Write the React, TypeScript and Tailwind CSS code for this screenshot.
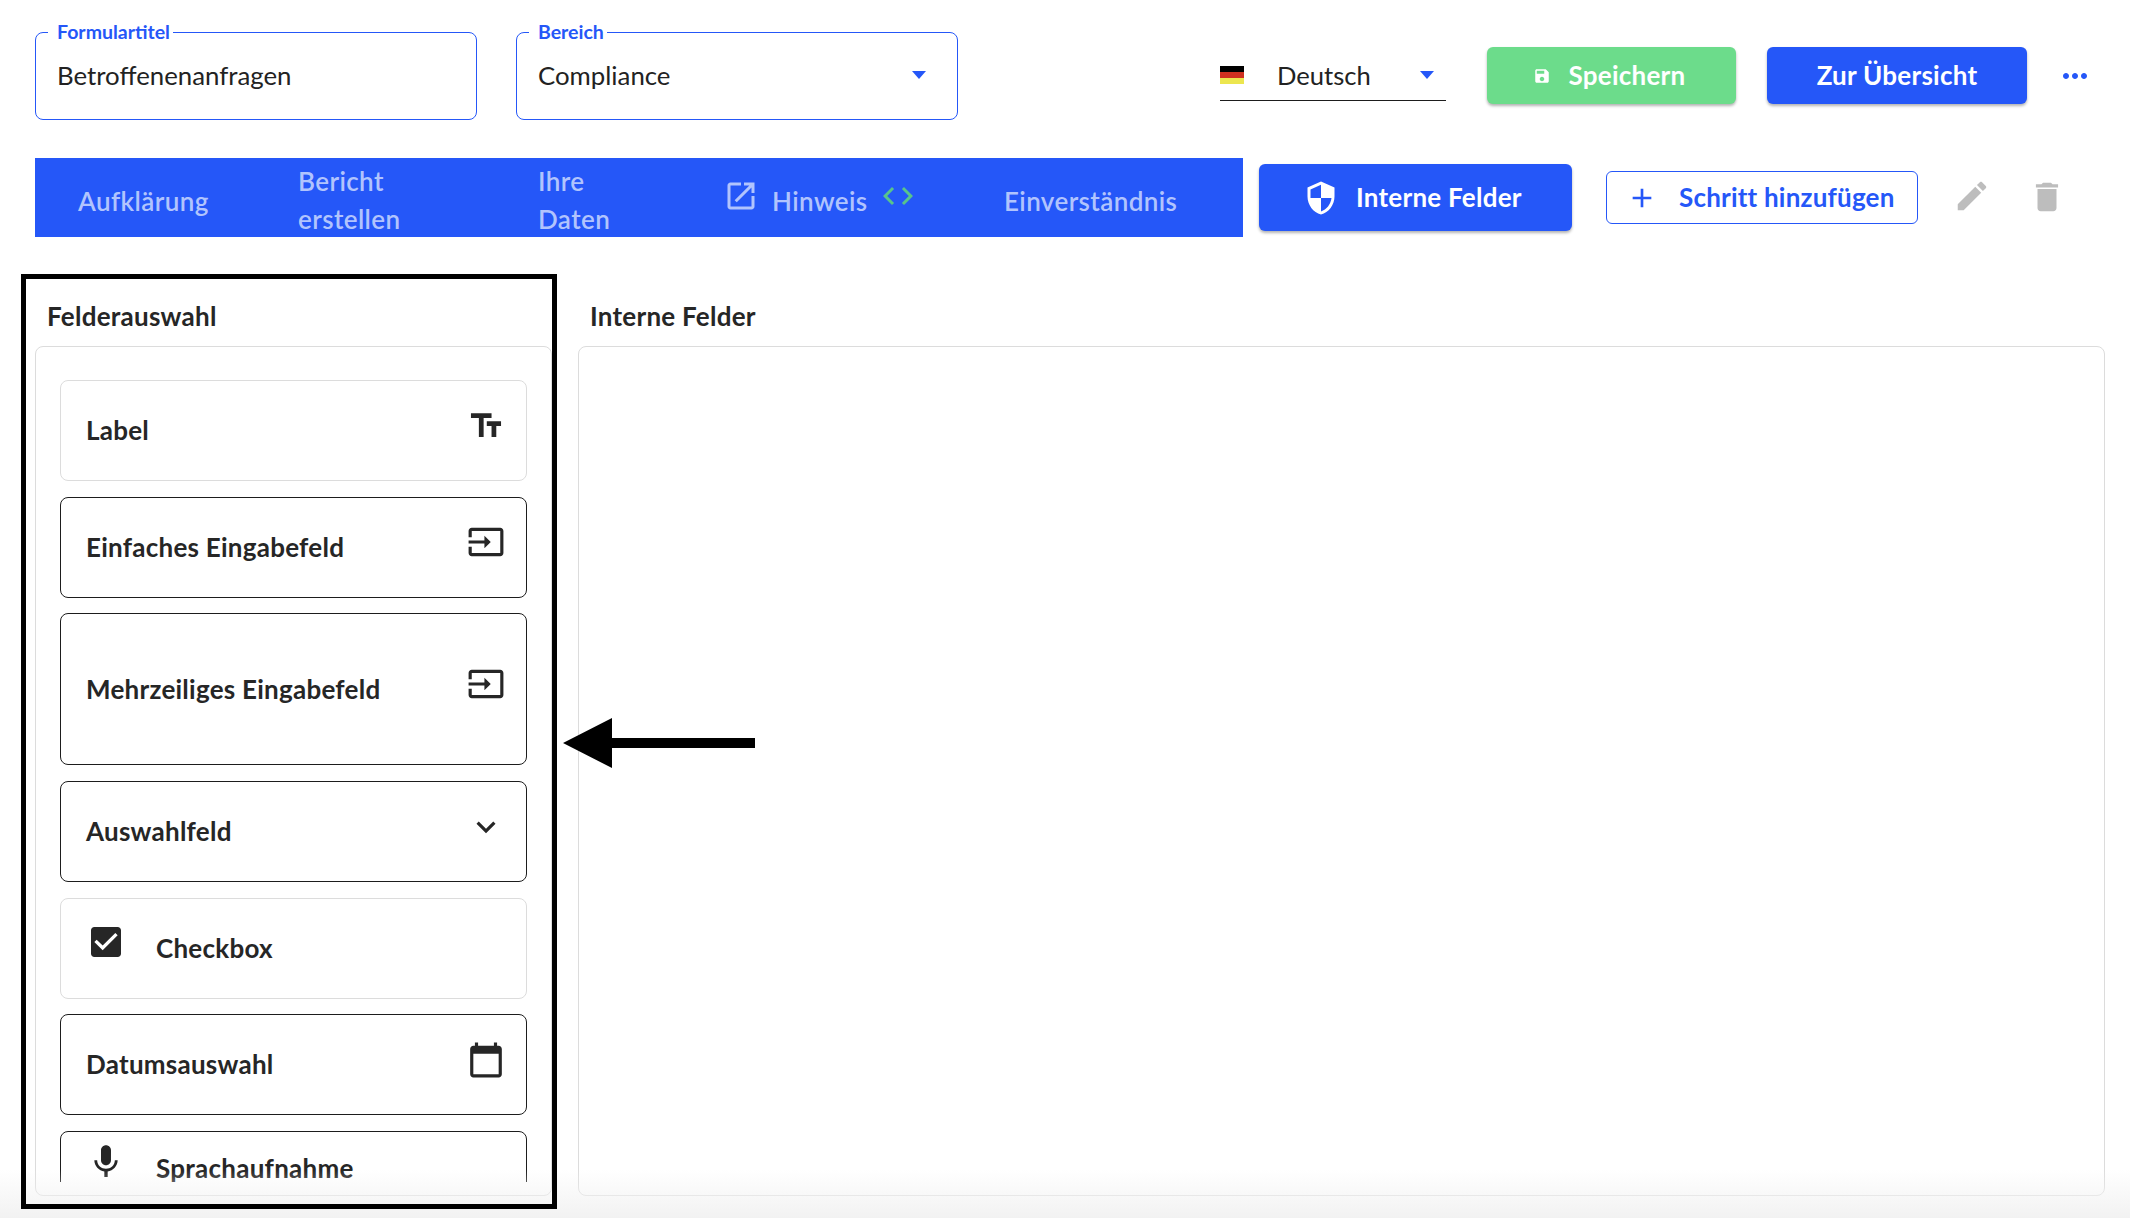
import React from 'react';

const paths = {
  save: 'M17 3H5c-1.11 0-2 .9-2 2v14c0 1.1.89 2 2 2h14c1.1 0 2-.9 2-2V7l-4-4zm-5 16c-1.66 0-3-1.34-3-3s1.34-3 3-3 3 1.34 3 3-1.34 3-3 3zm3-10H5V5h10v4z',
  shield: 'M12 1L3 5v6c0 5.55 3.84 10.74 9 12 5.16-1.26 9-6.45 9-12V5l-9-4zm0 10.99h7c-.53 4.12-3.28 7.79-7 8.94V12H5V6.3l7-3.11v8.8z',
  edit: 'M3 17.25V21h3.75L17.81 9.94l-3.75-3.75L3 17.25zM20.71 7.04c.39-.39.39-1.02 0-1.41l-2.34-2.34c-.39-.39-1.02-.39-1.41 0l-1.83 1.83 3.75 3.75 1.83-1.83z',
  trash: 'M6 19c0 1.1.9 2 2 2h8c1.1 0 2-.9 2-2V7H6v12zM19 4h-3.5l-1-1h-5l-1 1H5v2h14V4z',
  openNew: 'M19 19H5V5h7V3H5c-1.11 0-2 .9-2 2v14c0 1.1.89 2 2 2h14c1.1 0 2-.9 2-2v-7h-2v7zM14 3v2h3.59l-9.83 9.83 1.41 1.41L19 6.41V10h2V3h-7z',
  code: 'M9.4 16.6L4.8 12l4.6-4.6L8 6l-6 6 6 6 1.4-1.4zm5.2 0l4.6-4.6-4.6-4.6L16 6l6 6-6 6-1.4-1.4z',
  add: 'M19 13h-6v6h-2v-6H5v-2h6V5h2v6h6v2z',
  more: 'M6 10c-1.1 0-2 .9-2 2s.9 2 2 2 2-.9 2-2-.9-2-2-2zm12 0c-1.1 0-2 .9-2 2s.9 2 2 2 2-.9 2-2-.9-2-2-2zm-6 0c-1.1 0-2 .9-2 2s.9 2 2 2 2-.9 2-2-.9-2-2-2z',
  textFields: 'M2.5 4v3h5v12h3V7h5V4h-13zm19 5h-9v3h3v7h3v-7h3V9z',
  input: 'M21 3.01H3c-1.1 0-2 .9-2 2V9h2V4.99h18v14.03H3V15H1v4.01c0 1.1.9 1.98 2 1.98h18c1.1 0 2-.88 2-1.98v-14c0-1.11-.9-2-2-2zM11 16l4-4-4-4v3H1v2h10v3z',
  expand: 'M16.59 8.59L12 13.17 7.41 8.59 6 10l6 6 6-6z',
  checkbox: 'M19 3H5c-1.11 0-2 .9-2 2v14c0 1.1.89 2 2 2h14c1.11 0 2-.9 2-2V5c0-1.1-.89-2-2-2zm-9 14l-5-5 1.41-1.41L10 14.17l7.59-7.59L19 8l-9 9z',
  calendar: 'M20 3h-1V1h-2v2H7V1H5v2H4c-1.1 0-2 .9-2 2v16c0 1.1.9 2 2 2h16c1.1 0 2-.9 2-2V5c0-1.1-.9-2-2-2zm0 18H4V8h16v13z',
  mic: 'M12 14c1.66 0 2.99-1.34 2.99-3L15 5c0-1.66-1.34-3-3-3S9 3.34 9 5v6c0 1.66 1.34 3 3 3zm5.3-3c0 3-2.54 5.1-5.3 5.1S6.7 14 6.7 11H5c0 3.41 2.72 6.23 6 6.72V21h2v-3.28c3.28-.48 6-3.3 6-6.72h-1.7z',
};

function Icon({ d, className }: { d: string; className: string }) {
  return (
    <svg viewBox="0 0 24 24" fill="currentColor" className={className}>
      <path d={d} />
    </svg>
  );
}

function Caret({ className }: { className: string }) {
  return (
    <svg viewBox="0 0 14 8" fill="currentColor" className={className}>
      <path d="M0 0h14L7 8z" />
    </svg>
  );
}

function OutlinedField({ label, value, select }: { label: string; value: string; select?: boolean }) {
  return (
    <div className="relative w-[442px] h-[88px] shrink-0 border border-[#2557f8] rounded-[8px] pl-[21px] pr-[31px] pb-[2px] flex items-center justify-between">
      <span className="absolute left-[12px] -top-[11px] bg-white pl-[9px] pr-[3px] text-[19.5px] leading-[20px] font-bold text-[#2557f8]">{label}</span>
      <span className="text-[25.8px] text-[#222222]">{value}</span>
      {select && <Caret className="w-[14px] h-[8px] text-[#2557f8]" />}
    </div>
  );
}

function Tab({ lines }: { lines: string[] }) {
  return (
    <div className="flex flex-col shrink-0 text-[26px] tracking-[0.4px] leading-[38px] text-[#b1c4fd] font-semibold">
      {lines.map(l => <span key={l}>{l}</span>)}
    </div>
  );
}

function FieldItem({ label, icon, active, height, leading }: { label: string; icon: string; active?: boolean; height: string; leading?: boolean }) {
  const text = 'text-[26px] leading-[28px] tracking-[0.25px] font-bold text-[#262626]';
  return (
    <div className={`${height} shrink-0 border rounded-[8px] pl-[25px] pr-[21px] pb-[1px] flex items-center justify-between ${active ? 'border-[#1d1d1d]' : 'border-[#dcdcdc]'}`}>
      {leading ? (
        <div className="flex items-center">
          <Icon d={icon} className="w-[40px] h-[40px] text-[#262626] -mt-[11px]" />
          <span className={`ml-[30px] ${text}`}>{label}</span>
        </div>
      ) : (
        <>
          <span className={text}>{label}</span>
          <Icon d={icon} className="w-[38px] h-[38px] text-[#262626] -mt-[9px]" />
        </>
      )}
    </div>
  );
}

export default function App() {
  return (
    <div className="relative w-[2130px] h-[1218px] overflow-hidden bg-white font-['Lato',sans-serif]">
      <div className="flex items-start pt-[32px] pl-[35px]">
        <OutlinedField label="Formulartitel" value="Betroffenenanfragen" />
        <div className="w-[39px] shrink-0" />
        <OutlinedField label="Bereich" value="Compliance" select />
        <div className="ml-[262px] mt-[15px] w-[226px] h-[54px] border-b border-[#1d1d1d] flex items-center pt-[3px]">
          <div className="w-[24px] h-[18px] flex flex-col -mt-[1px]">
            <div className="flex-1 bg-black" />
            <div className="flex-1 bg-[#cf3020]" />
            <div className="flex-1 bg-[#ece64f]" />
          </div>
          <span className="ml-[33px] text-[25.6px] text-[#222222]">Deutsch</span>
          <Caret className="ml-auto mr-[12px] w-[14px] h-[8px] text-[#2557f8]" />
        </div>
        <button className="ml-[41px] mt-[15px] w-[249px] h-[57px] rounded-[6px] bg-[#6cdc8b] shadow-[0_2px_3px_rgba(0,0,0,0.3)] pr-[5px] flex items-center justify-center gap-[18px] text-white text-[26px] tracking-[0.25px] font-bold">
          <Icon d={paths.save} className="w-[18px] h-[18px]" />
          Speichern
        </button>
        <button className="ml-[31px] mt-[15px] w-[260px] h-[57px] rounded-[6px] bg-[#2557f8] shadow-[0_2px_3px_rgba(0,0,0,0.3)] text-white text-[26px] tracking-[0.25px] font-bold">
          Zur Übersicht
        </button>
        <Icon d={paths.more} className="ml-[30px] mt-[26px] w-[36px] h-[36px] text-[#2557f8]" />
      </div>

      <div className="flex items-start pl-[35px] mt-[38px]">
        <div className="w-[1208px] h-[79px] shrink-0 bg-[#2557f8] flex items-center pl-[43px]">
          <div className="w-[220px] shrink-0 mt-[7px]">
            <Tab lines={['Aufklärung']} />
          </div>
          <div className="w-[240px] shrink-0 mt-[5px]">
            <Tab lines={['Bericht', 'erstellen']} />
          </div>
          <div className="w-[189px] shrink-0 mt-[5px]">
            <Tab lines={['Ihre', 'Daten']} />
          </div>
          <div className="w-[277px] shrink-0 flex items-center text-[#b1c4fd] mt-[7px]">
            <Icon d={paths.openNew} className="w-[36px] h-[36px] -mt-[10px] -ml-[4px]" />
            <span className="ml-[13px] text-[26px] tracking-[0.4px] font-semibold">Hinweis</span>
            <Icon d={paths.code} className="ml-[12px] w-[36px] h-[36px] text-[#58c48b] -mt-[10px]" />
          </div>
          <div className="mt-[7px]">
            <Tab lines={['Einverständnis']} />
          </div>
        </div>
        <button className="ml-[16px] mt-[6px] w-[313px] h-[67px] rounded-[6px] bg-[#2557f8] shadow-[0_2px_3px_rgba(0,0,0,0.3)] flex items-center pl-[44px] text-white text-[26px] tracking-[0.25px] font-bold">
          <Icon d={paths.shield} className="w-[36px] h-[36px]" />
          <span className="ml-[17px]">Interne Felder</span>
        </button>
        <button className="ml-[34px] mt-[13px] w-[312px] h-[53px] rounded-[6px] border border-[#2557f8] flex items-center pl-[19px] text-[#2557f8] text-[26px] tracking-[0.2px] font-bold">
          <Icon d={paths.add} className="w-[32px] h-[32px]" />
          <span className="ml-[21px]">Schritt hinzufügen</span>
        </button>
        <Icon d={paths.edit} className="ml-[35px] mt-[19px] w-[38px] h-[38px] text-[#bdbdbd]" />
        <Icon d={paths.trash} className="ml-[37px] mt-[20px] w-[38px] h-[38px] text-[#bdbdbd]" />
      </div>

      <div className="flex pl-[35px] pr-[25px] mt-[60px] gap-[26px]">
        <div className="w-[517px] shrink-0">
          <h2 className="pl-[12px] h-[49px] text-[26px] tracking-[0.25px] leading-[38px] font-bold text-[#262626]">Felderauswahl</h2>
          <div className="h-[850px] border border-[#dcdcdc] rounded-[8px] pt-[33px] px-[24px] pb-[12px]">
            <div className="h-[802px] overflow-hidden flex flex-col gap-[15.7px]">
              <FieldItem label="Label" icon={paths.textFields} height="h-[101px]" />
              <FieldItem label="Einfaches Eingabefeld" icon={paths.input} height="h-[101px]" active />
              <FieldItem label="Mehrzeiliges Eingabefeld" icon={paths.input} height="h-[152px]" active />
              <FieldItem label="Auswahlfeld" icon={paths.expand} height="h-[101px]" active />
              <FieldItem label="Checkbox" icon={paths.checkbox} height="h-[101px]" leading />
              <FieldItem label="Datumsauswahl" icon={paths.calendar} height="h-[101px]" active />
              <FieldItem label="Sprachaufnahme" icon={paths.mic} height="h-[74px]" active leading />
            </div>
          </div>
        </div>
        <div className="flex-1">
          <h2 className="pl-[12px] h-[49px] text-[26px] tracking-[0.25px] leading-[38px] font-bold text-[#262626]">Interne Felder</h2>
          <div className="h-[850px] border border-[#dcdcdc] rounded-[8px]" />
        </div>
      </div>

      {/* annotation drawn over the screenshot */}
      <div className="absolute left-0 bottom-0 w-full h-[48px] bg-gradient-to-b from-transparent to-[#f2f2f2] pointer-events-none" />
      <div className="absolute left-[21px] top-[274px] w-[536px] h-[935px] border-[5px] border-black pointer-events-none" />
      <svg viewBox="0 0 192 50" className="absolute left-[563px] top-[718px] w-[192px] h-[50px]">
        <path d="M0 25L49 0v20h143v10H49v20z" fill="#000" />
      </svg>
    </div>
  );
}
